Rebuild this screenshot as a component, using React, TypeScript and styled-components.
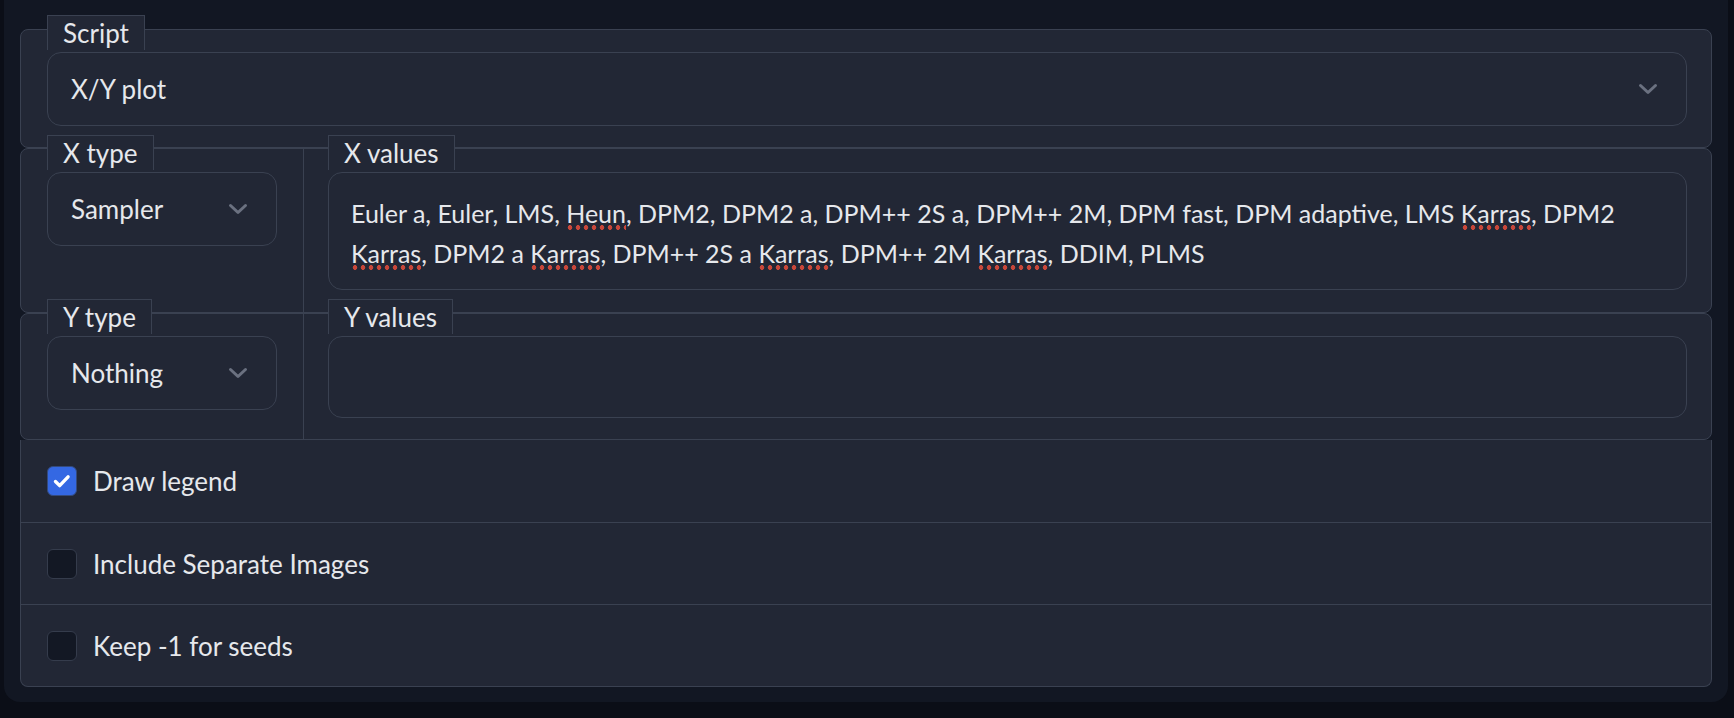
import React from "react";
import styled, { createGlobalStyle } from "styled-components";

const GlobalStyle = createGlobalStyle`
  html, body {
    margin: 0;
    padding: 0;
    background: #0b0e17;
  }
  body {
    font-family: Lato, "Noto Sans", sans-serif;
    color: #e6e8ec;
    -webkit-font-smoothing: antialiased;
  }
  *, *::before, *::after {
    box-sizing: border-box;
  }
`;

const BORDER = "#3a4151";
const BLOCK = "#222735";

const Panel = styled.div`
  margin: 0 6px 0 4px;
  background: #121723;
  border-radius: 0 0 16px 16px;
  padding: 29px 16px 15px;
`;

const Stack = styled.div`
  display: flex;
  flex-direction: column;
`;

const Block = styled.div`
  background: ${BLOCK};
  border: 1px solid ${BORDER};
  border-radius: 8px;
  padding: 22px 24px 21px 26px;
`;

const SplitRow = styled.div<{ $pt: number; $pb: number }>`
  display: grid;
  grid-template-columns: 283px 1fr;
  background: ${BLOCK};
  border: 1px solid ${BORDER};
  border-radius: 8px;

  & > * {
    padding-top: ${(p) => p.$pt}px;
    padding-bottom: ${(p) => p.$pb}px;
  }
`;

const TypeCell = styled.div`
  padding-left: 26px;
  padding-right: 26px;
  border-right: 1px solid ${BORDER};
`;

const ValueCell = styled.div`
  padding-left: 24px;
  padding-right: 24px;
`;

const Field = styled.div`
  position: relative;
`;

const Tab = styled.span`
  position: absolute;
  left: 0;
  top: -37px;
  height: 35px;
  padding: 0 15px;
  border: 1px solid ${BORDER};
  border-bottom: none;
  background: ${BLOCK};
  font-size: 26px;
  line-height: 34px;
  white-space: nowrap;
  z-index: 1;
`;

const Select = styled.div`
  height: 74px;
  border: 1px solid ${BORDER};
  border-radius: 14px;
  display: flex;
  align-items: center;
  justify-content: space-between;
  padding: 0 28px 0 23px;
  font-size: 26px;
  background: ${BLOCK};
`;

const Chevron = styled.svg`
  width: 20px;
  height: 12px;
  flex: none;
`;

const TextBox = styled.div`
  min-height: 82px;
  border: 1px solid ${BORDER};
  border-radius: 14px;
  padding: 20px 22px 16px;
  font-size: 25px;
  line-height: 40px;
  background: ${BLOCK};
`;

const Misspelled = styled.span`
  background-image: radial-gradient(circle at 4px 2.5px, #c8473a 2.1px, transparent 2.6px);
  background-size: 8px 5px;
  background-repeat: repeat-x;
  background-position: 0 100%;
  padding-bottom: 1.5px;
`;

const CheckList = styled.div`
  background: ${BLOCK};
  border: 1px solid ${BORDER};
  border-top: none;
  border-radius: 0 0 8px 8px;
`;

const CheckRow = styled.label`
  display: flex;
  align-items: center;
  gap: 16px;
  height: 82px;
  padding-left: 26px;
  font-size: 26px;

  & + & {
    border-top: 1px solid ${BORDER};
  }
`;

const Box = styled.span<{ $checked?: boolean }>`
  width: 30px;
  height: 30px;
  flex: none;
  border-radius: 6px;
  border: 1px solid ${(p) => (p.$checked ? "#344a7c" : "#353c4c")};
  background: ${(p) => (p.$checked ? "#3468e3" : "#131824")};
  display: flex;
  align-items: center;
  justify-content: center;
`;

const ChevronIcon = () => (
  <Chevron viewBox="0 0 20 12" fill="none">
    <polyline
      points="2.5,2.5 10,9.5 17.5,2.5"
      stroke="#6b7180"
      strokeWidth="3"
      strokeLinecap="round"
      strokeLinejoin="round"
    />
  </Chevron>
);

const Dropdown = ({ label, value }: { label: string; value: string }) => (
  <Field>
    <Tab>{label}</Tab>
    <Select>
      <span>{value}</span>
      <ChevronIcon />
    </Select>
  </Field>
);

const Check = ({ label, checked }: { label: string; checked?: boolean }) => (
  <CheckRow>
    <Box $checked={checked}>
      {checked && (
        <svg width="30" height="30" viewBox="0 0 30 30" fill="none">
          <polyline
            points="8,15.5 12.5,20 21.5,10.5"
            stroke="#ffffff"
            strokeWidth="3.6"
            strokeLinecap="round"
            strokeLinejoin="round"
          />
        </svg>
      )}
    </Box>
    <span>{label}</span>
  </CheckRow>
);

export default function App() {
  return (
    <>
      <GlobalStyle />
      <Panel>
        <Stack>
          <Block>
            <Dropdown label="Script" value="X/Y plot" />
          </Block>

          <SplitRow $pt={23} $pb={22}>
            <TypeCell>
              <Dropdown label="X type" value="Sampler" />
            </TypeCell>
            <ValueCell>
              <Field>
                <Tab>X values</Tab>
                <TextBox>
                  Euler a, Euler, LMS, <Misspelled>Heun</Misspelled>, DPM2, DPM2 a, DPM++ 2S a,
                  DPM++ 2M, DPM fast, DPM adaptive, LMS <Misspelled>Karras</Misspelled>, DPM2{" "}
                  <Misspelled>Karras</Misspelled>, DPM2 a <Misspelled>Karras</Misspelled>, DPM++
                  2S a <Misspelled>Karras</Misspelled>, DPM++ 2M <Misspelled>Karras</Misspelled>,
                  DDIM, PLMS
                </TextBox>
              </Field>
            </ValueCell>
          </SplitRow>

          <SplitRow $pt={22} $pb={21}>
            <TypeCell>
              <Dropdown label="Y type" value="Nothing" />
            </TypeCell>
            <ValueCell>
              <Field>
                <Tab>Y values</Tab>
                <TextBox />
              </Field>
            </ValueCell>
          </SplitRow>

          <CheckList>
            <Check label="Draw legend" checked />
            <Check label="Include Separate Images" />
            <Check label="Keep -1 for seeds" />
          </CheckList>
        </Stack>
      </Panel>
    </>
  );
}
